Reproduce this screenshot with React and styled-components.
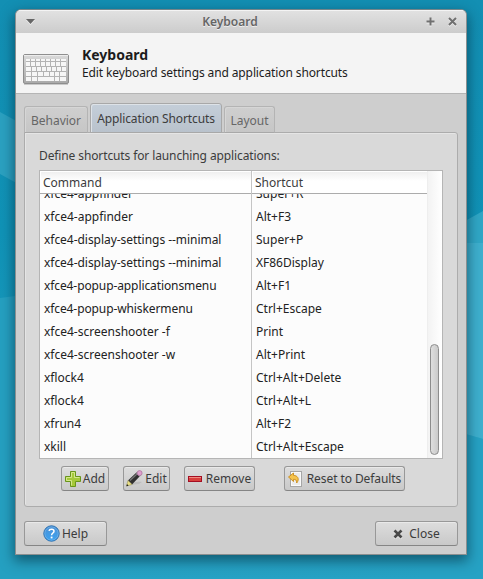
import React from "react";
import styled, { createGlobalStyle } from "styled-components";

const GlobalStyle = createGlobalStyle`
  * { box-sizing: border-box; }
  body { margin: 0; overflow: hidden; font: 12px/16px "Noto Sans", sans-serif; color: #222; }
`;

const Desktop = styled.div`
  position: relative;
  width: 483px;
  height: 579px;
  padding: 9px 16px 24px 15px;
  overflow: hidden;
`;
const Wallpaper = styled.svg`
  position: absolute;
  inset: 0;
`;
const Window = styled.div`
  position: relative;
  display: flex;
  flex-direction: column;
  width: 452px;
  height: 546px;
  border: 1px solid #8b8f90;
  border-top-color: #75858a;
  border-radius: 6px 6px 0 0;
  background: #cecece;
  box-shadow: 0 5px 13px 1px rgba(0, 35, 50, 0.55);
  overflow: hidden;
`;
const TitleBar = styled.div`
  display: flex;
  align-items: center;
  height: 23px;
  padding: 1px 9px 0 10px;
  background: linear-gradient(#e2e2e2, #cccccc);
  box-shadow: inset 0 1px #f4f4f4;
  flex: none;
`;
const Title = styled.div`
  flex: 1;
  padding-right: 1px;
  text-align: center;
  font-weight: 600;
  color: #666;
  text-shadow: 0 1px #eee;
`;
const TitleIcon = styled.svg`
  display: block;
  margin-left: ${(p) => p.$gap || 0}px;
`;
const Header = styled.div`
  display: flex;
  height: 61px;
  flex: none;
  background: #f4f4f4;
  border-bottom: 1px solid #b5b5b5;
  padding: 0 0 0 7px;
`;
const KeyboardIcon = styled.svg`
  margin-top: 21px;
  flex: none;
`;
const Headings = styled.div`
  display: flex;
  flex-direction: column;
  gap: 1px;
  margin: 13px 0 0 13px;
  color: #1c1c1c;
`;
const Heading = styled.div`
  font-size: 14px;
  line-height: 18px;
  font-weight: 700;
`;
const Subheading = styled.div`
  white-space: nowrap;
  letter-spacing: -0.115px;
`;
const Content = styled.div`
  display: flex;
  flex-direction: column;
  flex: 1;
  padding: 9px 8px 8px;
`;
const Tabs = styled.div`
  display: flex;
  align-items: flex-end;
  gap: 2px;
  height: 30px;
  margin-bottom: -1px;
`;
const Tab = styled.div`
  position: relative;
  width: ${(p) => p.$width}px;
  height: ${(p) => (p.$active ? 30 : 27)}px;
  padding-top: ${(p) => (p.$active ? 7 : 6)}px;
  text-align: center;
  white-space: nowrap;
  color: ${(p) => (p.$active ? "#3c3c3c" : "#666")};
  background: ${(p) => (p.$active ? "linear-gradient(#c4ced9, #b9c2cc)" : "linear-gradient(#cfcfcf, #c6c6c6)")};
  border: 1px solid ${(p) => (p.$active ? "#a8a8a8" : "#b4b4b4")};
  border-bottom-color: #a8a8a8;
  border-radius: 3px 3px 0 0;
  box-shadow: inset 1px 1px ${(p) => (p.$active ? "#dde2e7" : "#d6d6d6")};
  letter-spacing: ${(p) => (p.$active ? -0.12 : 0)}px;
`;
const Panel = styled.div`
  display: flex;
  flex-direction: column;
  height: 375px;
  border: 1px solid #acacac;
  border-radius: 0 3px 3px 3px;
  background: #d9d9d9;
  box-shadow: inset 1px 1px #e5e5e5;
  padding: 15px 14px 0;
`;
const Caption = styled.div`
  height: 22px;
  color: #3c3c3c;
  letter-spacing: -0.115px;
`;
const List = styled.div`
  display: flex;
  width: 404px;
  height: 289px;
  flex: none;
  border: 1px solid #b5b5b5;
  background: #fcfcfc;
`;
const Column = styled.div`
  display: flex;
  flex-direction: column;
  width: ${(p) => p.$width}px;
  flex: none;
  border-right: 1px solid ${(p) => p.$line};
`;
const ColumnTitle = styled.div`
  height: 23px;
  flex: none;
  padding: 4px 3px 0;
  border-bottom: 1px solid #acacac;
  background: linear-gradient(#eeeeee, #ffffff 10px);
  box-shadow: inset 1px 1px #fff;
  color: #3c3c3c;
`;
const Cells = styled.div`
  flex: 1;
  display: flex;
  flex-direction: column;
  justify-content: flex-end;
  overflow: hidden;
`;
const Cell = styled.div`
  height: 23px;
  flex: none;
  padding: 4px 4px 0;
  white-space: nowrap;
  color: #222;
  letter-spacing: ${(p) => p.$track || 0}px;
`;
const ScrollTrack = styled.div`
  display: flex;
  align-items: flex-end;
  flex: 1;
  padding: 0 3px 3px 2px;
  background: linear-gradient(90deg, #f3f3f3, #ffffff);
`;
const Thumb = styled.div`
  width: 9px;
  height: 111px;
  border: 1px solid #8c8c8c;
  border-radius: 5px;
  background: linear-gradient(90deg, #dedede, #cacaca);
`;
const Actions = styled.div`
  display: flex;
  margin: 7px 0 0 22px;
`;
const Footer = styled.div`
  display: flex;
  justify-content: space-between;
  margin-top: auto;
`;
const Button = styled.button`
  display: flex;
  align-items: center;
  justify-content: center;
  gap: ${(p) => p.$gap ?? 2}px;
  width: ${(p) => p.$width}px;
  height: 25px;
  flex: none;
  margin: 0 0 0 ${(p) => p.$left || 0}px;
  padding: 0;
  border: 1px solid #989898;
  border-bottom-color: #858585;
  border-radius: 3px;
  background: linear-gradient(#dddddd, #c9c9c9);
  box-shadow: inset 0 1px #e9e9e9;
  font: inherit;
  letter-spacing: ${(p) => p.$track || 0}px;
  color: #3c3c3c;
  white-space: nowrap;
`;

const shortcuts = [
  { command: "xfce4-appfinder", keys: "Super+R" },
  { command: "xfce4-appfinder", keys: "Alt+F3" },
  { command: "xfce4-display-settings --minimal", keys: "Super+P", track: -0.04 },
  { command: "xfce4-display-settings --minimal", keys: "XF86Display", track: -0.04 },
  { command: "xfce4-popup-applicationsmenu", keys: "Alt+F1", track: -0.1 },
  { command: "xfce4-popup-whiskermenu", keys: "Ctrl+Escape", track: -0.1 },
  { command: "xfce4-screenshooter -f", keys: "Print" },
  { command: "xfce4-screenshooter -w", keys: "Alt+Print" },
  { command: "xflock4", keys: "Ctrl+Alt+Delete" },
  { command: "xflock4", keys: "Ctrl+Alt+L" },
  { command: "xfrun4", keys: "Alt+F2" },
  { command: "xkill", keys: "Ctrl+Alt+Escape" },
];

const keyRows = [
  { y: 5, h: 2, w: [4, 4, 4, 4, 4, 4, 4, 4] },
  { y: 8, h: 4, w: [4, 4, 4, 4, 4, 4, 4, 4] },
  { y: 13, h: 4, w: [5, 4, 4, 4, 4, 4, 4, 3] },
  { y: 18, h: 4, w: [5, 5, 5, 5, 4, 4, 5] },
  { y: 23, h: 4, w: [5, 5, 16, 4, 5] },
];

function Keyboard() {
  return (
    <KeyboardIcon width="46" height="31" viewBox="0 0 46 31">
      <defs>
        <linearGradient id="kb" x2="0" y2="1">
          <stop stopColor="#dadada" />
          <stop offset="1" stopColor="#a9a9a9" />
        </linearGradient>
      </defs>
      <rect x=".5" y=".5" width="45" height="29" rx="1.5" fill="url(#kb)" stroke="#8e8e8e" />
      <path d="M1 1.5h44" stroke="#ececec" />
      <path d="M1 30.5h44" stroke="#c9c9c9" />
      <rect x="3" y="5" width="40" height="22" fill="#b4b4b4" />
      {keyRows.map((row) => {
        const free = 40 - row.w.reduce((sum, w) => sum + w, 0) - (row.w.length - 1);
        let x = 3;
        return row.w.map((w, i) => {
          const width = i === row.w.length - 1 ? w + free : w;
          const key = <rect key={row.y + "-" + i} x={x} y={row.y} width={width} height={row.h} fill="#f7f7f7" />;
          x += w + 1;
          return key;
        });
      })}
    </KeyboardIcon>
  );
}

const AddIcon = () => (
  <svg width="16" height="16" viewBox="0 0 16 16">
    <path d="M5.5.5h5v5h5v5h-5v5h-5v-5h-5v-5h5z" fill="#a5c93a" stroke="#68951b" />
    <path d="M6.500 14.500v-5h-5v-3h5v-5h3v5h5" fill="none" stroke="#d4e78c" />
  </svg>
);
const EditIcon = () => (
  <svg width="17" height="17" viewBox="0 0 17 17">
    <path d="M4 15c3-3 7-4 12-3l-3 2z" fill="#bdbdbd" />
    <path d="M2 10.500 11 2l3.500 3.500-8.500 9z" fill="#303030" />
    <path d="M4 10.500 11.500 3.500" stroke="#777" strokeWidth="1.300" />
    <path d="M2 10.500 6 14.500.5 16z" fill="#e9df83" stroke="#918b4d" strokeWidth=".5" />
    <path d="M.4 16.200 1 14l1.600 1.700z" fill="#222" />
    <path d="M10 3 11.500 1.500 15.200 5.200 13.700 6.700z" fill="#aaa" />
    <circle cx="13.600" cy="3.100" r="2.500" fill="#dfa0cd" stroke="#a86e9b" strokeWidth=".7" />
  </svg>
);
const RemoveIcon = () => (
  <svg width="14" height="16" viewBox="0 0 14 16">
    <rect x=".5" y="5.500" width="13" height="5" fill="#d8403d" stroke="#a40e22" />
    <path d="M1 6.500h12" stroke="#f08b80" />
  </svg>
);
const ResetIcon = () => (
  <svg width="15" height="16" viewBox="0 0 15 16">
    <rect x="2.500" y=".5" width="11" height="15" fill="#ececec" stroke="#a6a6a6" />
    <rect x="3.500" y="1.500" width="9" height="13" fill="none" stroke="#fafafa" />
    <path d="M.5 6 5.500 2v2.400c4 0 6.500 3.500 3.200 7.600 0-3-1-3.700-3.200-3.700v2.200z" fill="#f5c34d" stroke="#c98b19" strokeWidth=".9" />
  </svg>
);
const HelpIcon = () => (
  <svg width="17" height="17" viewBox="0 0 17 17">
    <defs>
      <linearGradient id="help" x2="0" y2="1">
        <stop stopColor="#4d91d5" />
        <stop offset="1" stopColor="#3ba3f1" />
      </linearGradient>
    </defs>
    <circle cx="8.500" cy="8.500" r="7.700" fill="url(#help)" stroke="#266cae" />
    <circle cx="8.500" cy="8.500" r="6.700" fill="none" stroke="#82b8e8" strokeWidth=".6" />
    <path d="M6 5.800C6.500 3.600 11 3.500 11 6.200c0 1.800-2.400 1.800-2.400 4" fill="none" stroke="#fff" strokeWidth="1.500" />
    <rect x="7.700" y="11.600" width="1.800" height="1.800" fill="#fff" />
  </svg>
);
const CloseIcon = () => (
  <svg width="10" height="10" viewBox="0 0 10 10">
    <path d="M1.500 1.500l7 7m0-7l-7 7" stroke="#f0f0f0" strokeWidth="2.600" transform="translate(0 1)" />
    <path d="M1.500 1.500l7 7m0-7l-7 7" stroke="#484848" strokeWidth="2.600" />
  </svg>
);

export default function App() {
  return (
    <Desktop>
      <GlobalStyle />
      <Wallpaper width="483" height="579" viewBox="0 0 483 579">
        <defs>
          <linearGradient id="sky" x2="0" y2="1">
            <stop stopColor="#138fb3" />
            <stop offset=".4" stopColor="#1093b7" />
            <stop offset="1" stopColor="#26a2c4" />
          </linearGradient>
        </defs>
        <rect width="483" height="579" fill="url(#sky)" />
        <path d="M0 112 60 145V207L0 174z" fill="#2ba1c1" />
        <path d="M0 298 60 290V579H0z" fill="#25a0c1" />
        <path d="M483 211 420 246V579h63z" fill="#30a7c6" />
        <path d="M420 243h63v196l-63-18z" fill="#3eb0ce" />
        <path d="M420 421 483 439V579h-63z" fill="#26a2c4" />
      </Wallpaper>
      <Window>
        <TitleBar>
          <TitleIcon width="9" height="6" viewBox="0 0 9 6">
            <path d="M0 1h9L4.500 6z" fill="#f0f0f0" />
            <path d="M0 0h9L4.500 5z" fill="#666" />
          </TitleIcon>
          <Title>Keyboard</Title>
          <TitleIcon width="9" height="10" viewBox="0 0 9 10">
            <path d="M.5 5.500h8M4.500 1.500v8" stroke="#f0f0f0" strokeWidth="2" />
            <path d="M.5 4.500h8M4.500.5v8" stroke="#707070" strokeWidth="2" />
          </TitleIcon>
          <TitleIcon $gap={13} width="9" height="10" viewBox="0 0 9 10">
            <path d="M1 2l7 7m0-7L1 9" stroke="#f0f0f0" strokeWidth="2" />
            <path d="M1 1l7 7m0-7L1 8" stroke="#707070" strokeWidth="2" />
          </TitleIcon>
        </TitleBar>
        <Header>
          <Keyboard />
          <Headings>
            <Heading>Keyboard</Heading>
            <Subheading>Edit keyboard settings and application shortcuts</Subheading>
          </Headings>
        </Header>
        <Content>
          <Tabs>
            <Tab $width={64}>Behavior</Tab>
            <Tab $width={132} $active>Application Shortcuts</Tab>
            <Tab $width={51}>Layout</Tab>
          </Tabs>
          <Panel>
            <Caption>Define shortcuts for launching applications:</Caption>
            <List>
              <Column $width={212} $line="#c5c5c5">
                <ColumnTitle>Command</ColumnTitle>
                <Cells>{shortcuts.map((s, i) => <Cell key={i} $track={s.track}>{s.command}</Cell>)}</Cells>
              </Column>
              <Column $width={176} $line="#eeeeee">
                <ColumnTitle>Shortcut</ColumnTitle>
                <Cells>{shortcuts.map((s, i) => <Cell key={i}>{s.keys}</Cell>)}</Cells>
              </Column>
              <ScrollTrack><Thumb /></ScrollTrack>
            </List>
            <Actions>
              <Button $width={48}><AddIcon />Add</Button>
              <Button $width={47} $left={14}><EditIcon />Edit</Button>
              <Button $width={71} $left={14} $gap={4}><RemoveIcon />Remove</Button>
              <Button $width={121} $left={29} $gap={4} $track={-0.08}><ResetIcon />Reset to Defaults</Button>
            </Actions>
          </Panel>
          <Footer>
            <Button $width={83}><HelpIcon />Help</Button>
            <Button $width={83} $gap={6}><CloseIcon />Close</Button>
          </Footer>
        </Content>
      </Window>
    </Desktop>
  );
}
